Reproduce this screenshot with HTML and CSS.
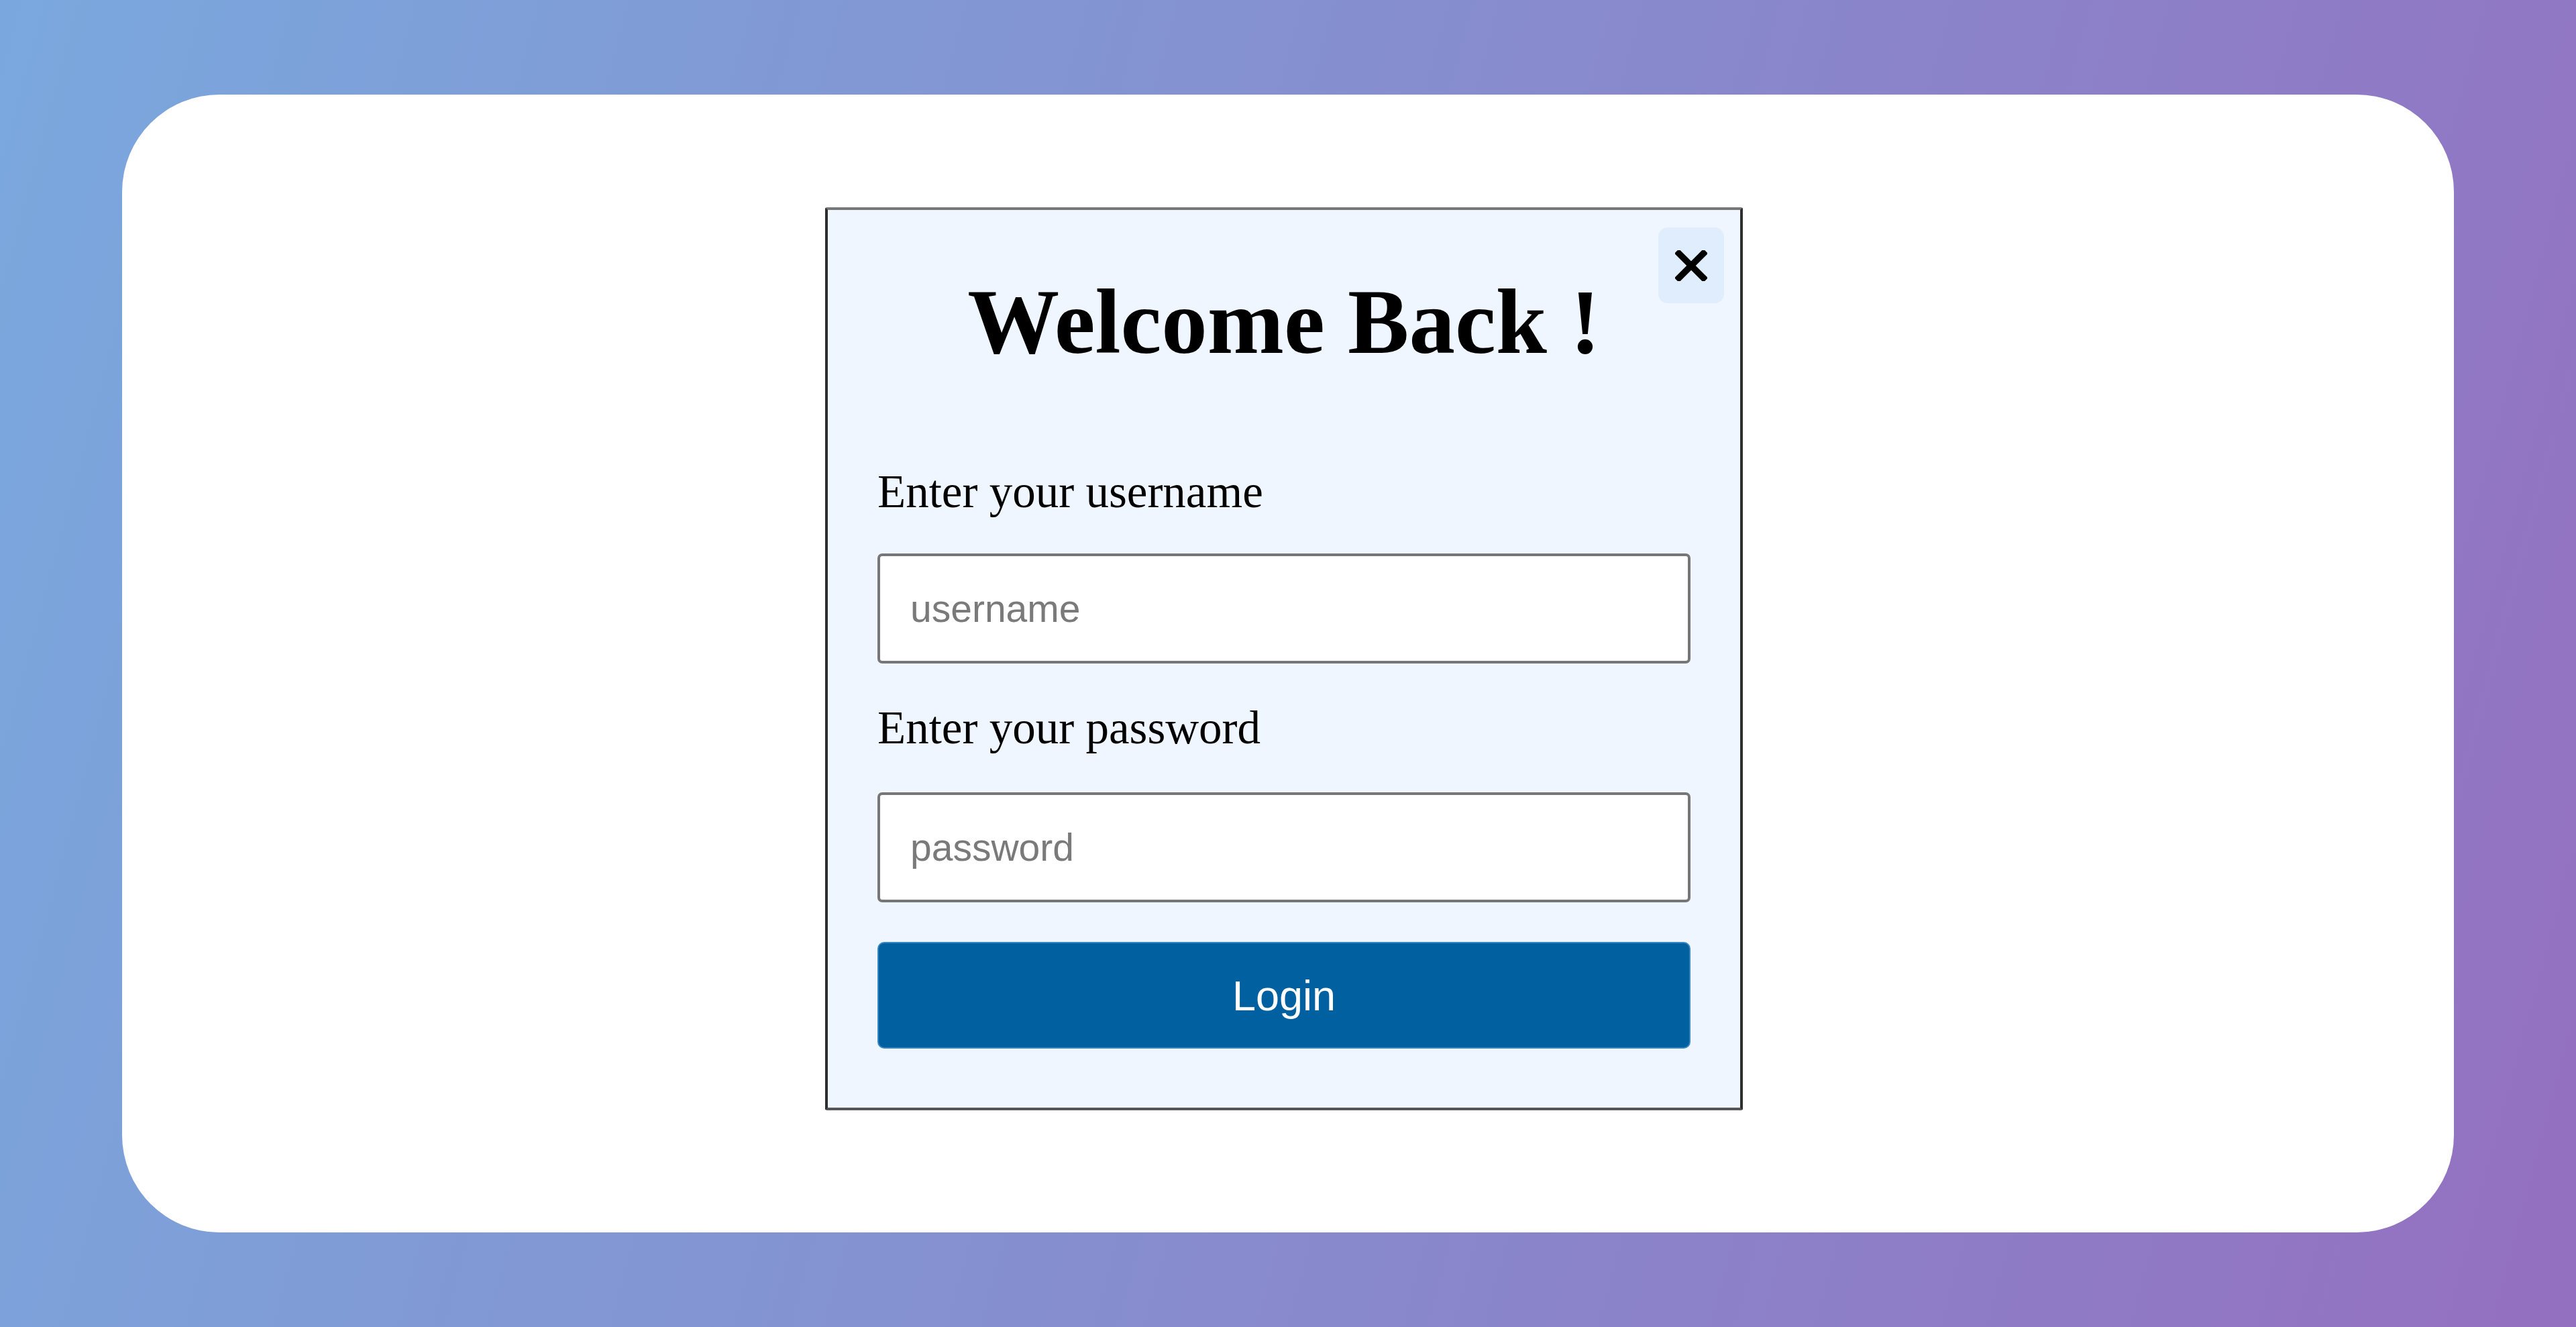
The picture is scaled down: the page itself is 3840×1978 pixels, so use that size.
FILE: index.html
```html
<!DOCTYPE html>
<html lang="en">
<head>
<meta charset="utf-8">
<title>Login</title>
<link rel="stylesheet" href="styles.css">
</head>
<body>
<div class="card">
  <div class="modal">
    <button class="close" type="button" aria-label="Close">
      <svg viewBox="0 0 48 48" width="48" height="46"><path d="M5 5 L43 43 M43 5 L5 43" stroke="#000" stroke-width="10" stroke-linecap="square" fill="none"/></svg>
    </button>
    <h1 class="title">Welcome Back !</h1>
    <form class="form">
      <label class="label" for="u">Enter your username</label>
      <input class="input" id="u" type="text" placeholder="username">
      <label class="label label-2" for="p">Enter your password</label>
      <input class="input" id="p" type="password" placeholder="password">
      <button class="login" type="button">Login</button>
    </form>
  </div>
</div>
</body>
</html>
```

FILE: styles.css
```css
html, body {
  margin: 0;
  padding: 0;
}
body {
  height: 1978px;
  overflow: hidden;
  background: linear-gradient(105deg, #7aa8de 0%, #8590d0 45%, #9470c0 100%);
  font-family: "Liberation Serif", "Times New Roman", serif;
  box-sizing: border-box;
  padding: 141px 182px;
}
.card {
  height: 1696px;
  background: #fff;
  border-radius: 145px;
  display: flex;
  justify-content: center;
  align-items: flex-start;
  padding-top: 168px;
  box-sizing: border-box;
}
.modal {
  position: relative;
  width: 1368px;
  box-sizing: border-box;
  background: #eff6ff;
  border: 4px solid #2e2e2e;
  border-top-color: #777;
  border-bottom-color: #555;
  border-radius: 3px;
  padding: 89px 74px 88px;
  margin-left: -12px;
}
.close {
  position: absolute;
  top: 26px;
  right: 24px;
  width: 98px;
  height: 113px;
  background: #dfedfd;
  border: none;
  border-radius: 14px;
  padding: 0;
  display: flex;
  align-items: center;
  justify-content: center;
}
.title {
  margin: 0;
  text-align: center;
  font-family: "Liberation Serif", "Times New Roman", serif;
  font-weight: bold;
  font-size: 137px;
  line-height: 156px;
  color: #000;
}
.form {
  display: flex;
  flex-direction: column;
  margin-top: 135px;
}
.label {
  font-size: 69px;
  line-height: 80px;
  color: #000;
  margin-bottom: 52px;
}
.label-2 {
  margin-top: 56px;
  margin-bottom: 56px;
}
.input {
  height: 164px;
  box-sizing: border-box;
  border: 4px solid #767676;
  border-radius: 7px;
  background: #fff;
  padding: 0 0 0 45px;
  font-family: "Liberation Sans", Arial, sans-serif;
  font-size: 57px;
  color: #000;
  outline: none;
}
.input::placeholder {
  color: #7a7a7a;
}
.login {
  margin-top: 59px;
  height: 159px;
  border: 2px solid #3a86c0;
  border-radius: 10px;
  background: #0060a0;
  color: #fff;
  font-family: "Liberation Sans", Arial, sans-serif;
  font-size: 63px;
  padding: 0;
}
```
